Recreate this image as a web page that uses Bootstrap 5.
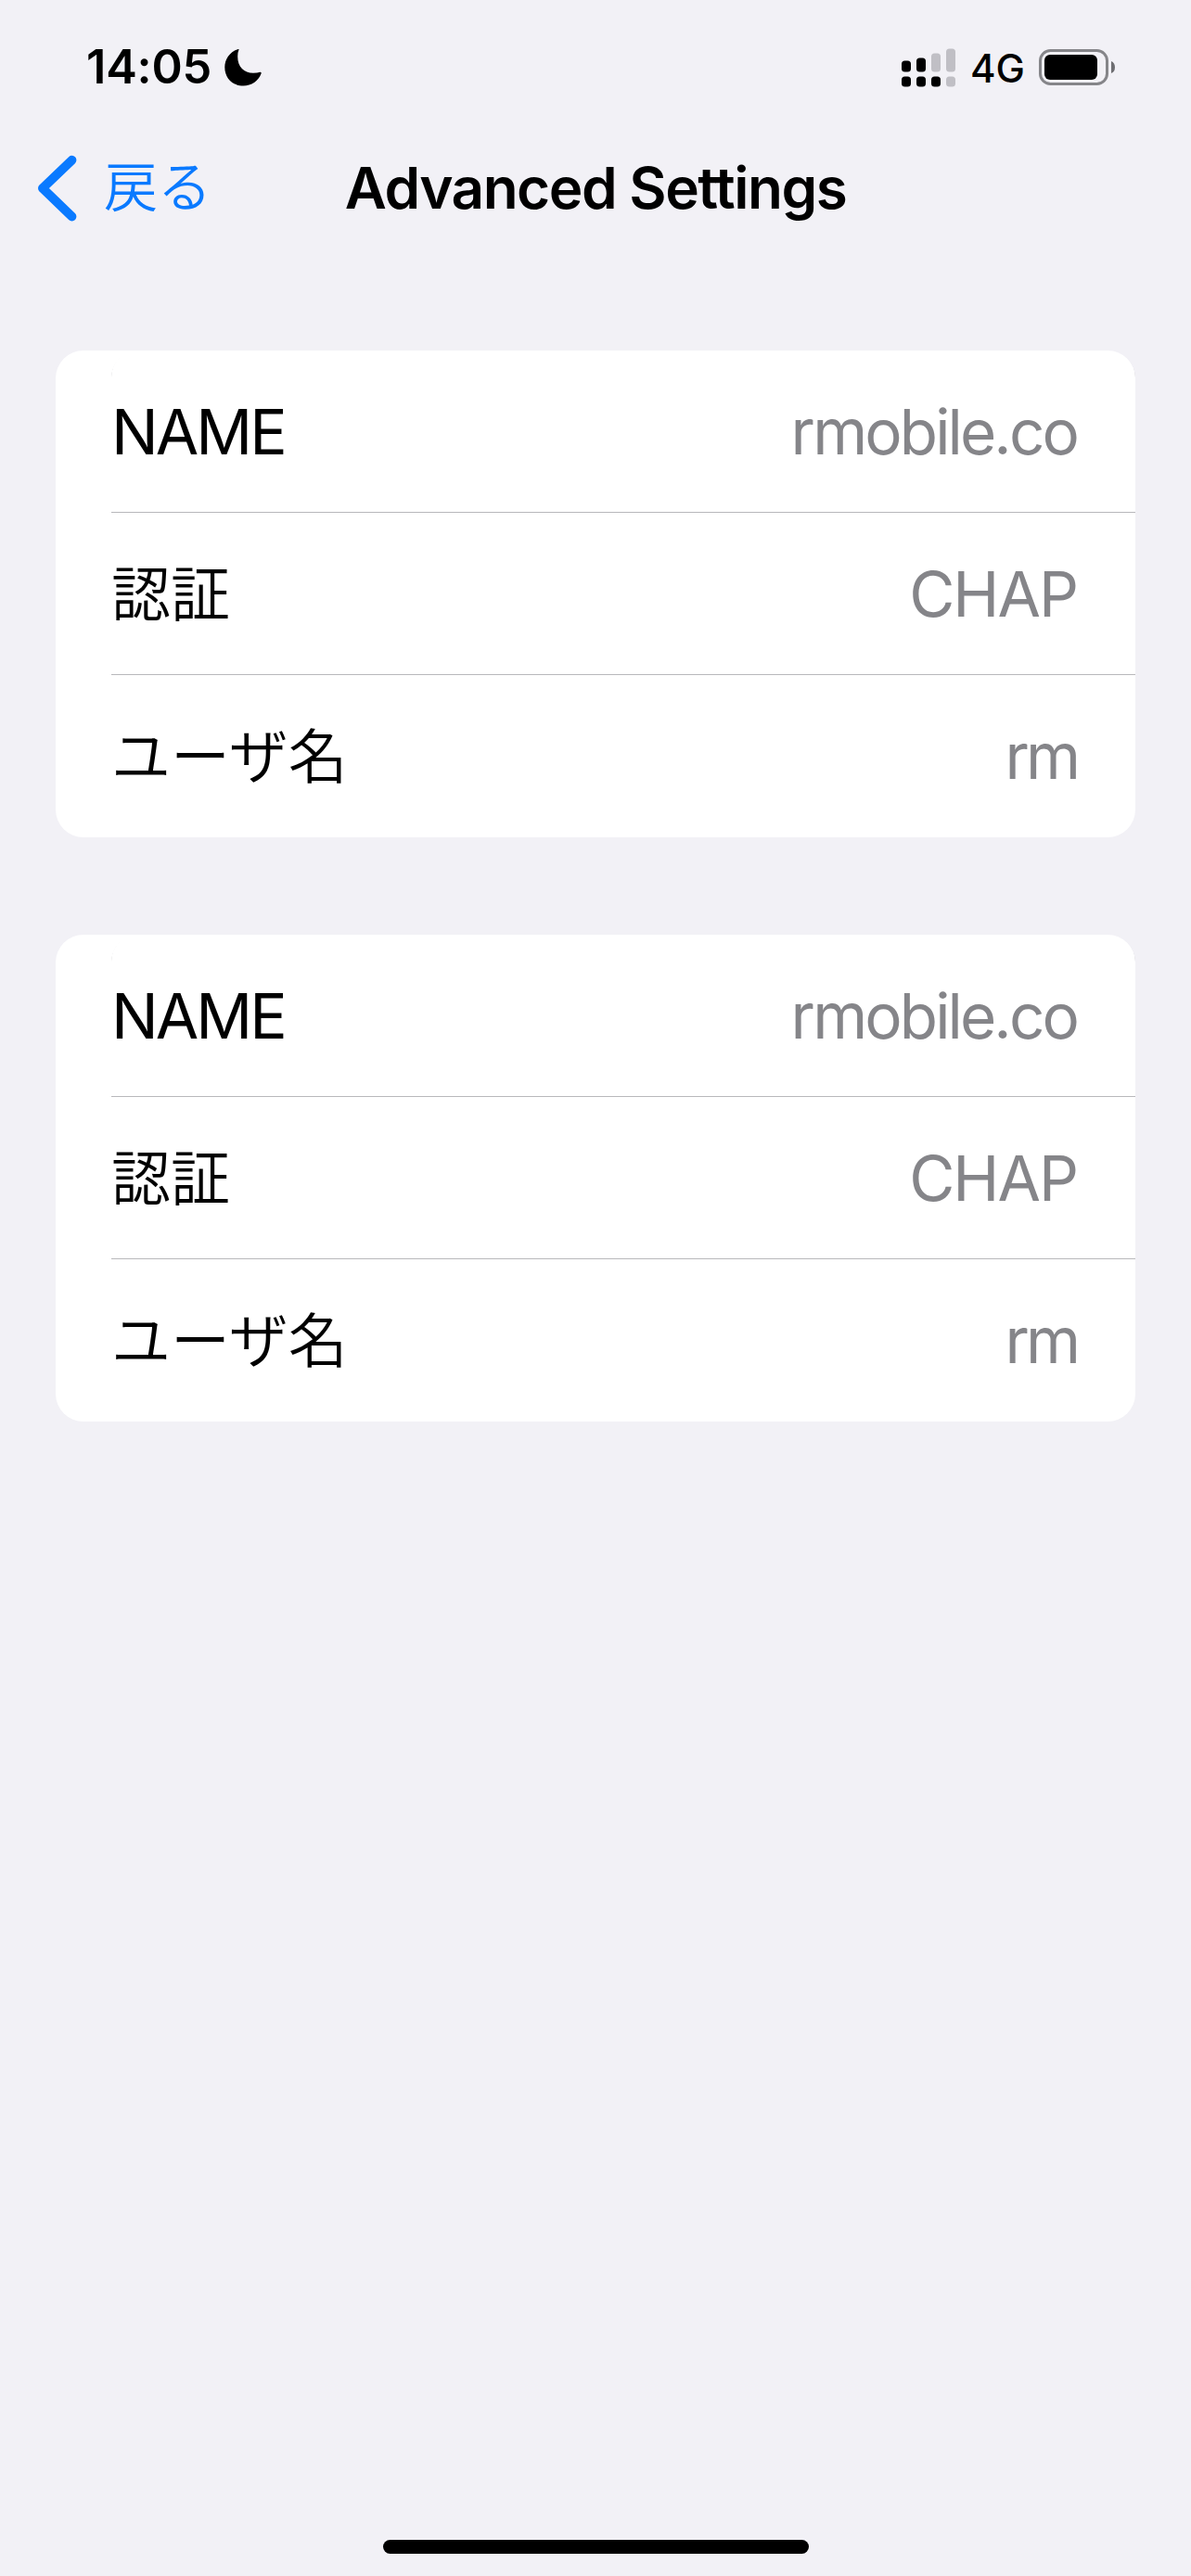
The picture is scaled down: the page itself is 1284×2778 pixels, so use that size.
<!DOCTYPE html>
<html lang="ja">
<head>
<meta charset="utf-8">
<meta name="viewport" content="width=device-width, initial-scale=1">
<title>Advanced Settings</title>
<link href="https://cdn.jsdelivr.net/npm/bootstrap@5.3.0/dist/css/bootstrap.min.css" rel="stylesheet">
<style>
body { background: #f2f1f6; color: #000; font-family: Inter, "Noto Sans CJK JP", sans-serif; }
.screen { height: 2778px; width: 1284px; overflow: hidden; }
.status-bar { height: 145px; padding: 0 82px 0 93px; }
.clock { font-size: 50.5px; font-weight: 600; line-height: 1; letter-spacing: -.2px; }
.moon { margin-left: 14px; }
.carrier { font-size: 42px; font-weight: 500; line-height: 1; margin: 3px 15px 0 16px; }
.title-bar { height: 115px; padding: 0 41px; margin-bottom: 118px; }
.title-bar > * { flex: 1 1 0; }
.back-link { color: #0a7aff; font-family: "Noto Sans CJK JP", sans-serif; font-size: 58px; line-height: 1; font-weight: 350; }
.back-link svg { margin-right: 29px; }
.back-text { padding-bottom: 10px; }
.title-bar .page-title { font-size: 62px; font-weight: 600; line-height: 1; letter-spacing: -1.48px; flex: none; margin: 0; white-space: nowrap; }
.groups { gap: 105px; padding: 0 60px; }
.group { --bs-list-group-border-width: 0; background: #fff; border-radius: 30px; padding-left: 60px; }
.setting { height: 175px; padding: 0 63px 0 0; background: transparent; color: #000; border-radius: 0; font-size: 67.4px; line-height: 1; }
.setting:not(:last-child) { box-shadow: inset 0 -1px #b8b8bb; }
.setting-value { color: #858589; letter-spacing: -2.9px; }
.value-caps { letter-spacing: -2px; }
.value-short { letter-spacing: -4px; }
.setting-label { letter-spacing: -3px; }
.label-ja { font-family: "Noto Sans CJK JP", sans-serif; font-size: 64px; font-weight: 350; letter-spacing: 0; padding-bottom: 9px; }
.home-bar { width: 459px; height: 15px; border-radius: 8px; background: #000; margin-bottom: 24px; }
</style>
</head>
<body>
<div class="screen d-flex flex-column">
  <header class="status-bar d-flex align-items-center justify-content-between">
    <div class="d-flex align-items-center">
      <span class="clock">14:05</span>
      <svg class="moon" width="40" height="40" viewBox="0 0 40 40"><path d="M15.500.6Q14.200 3.500 14.200 8C14.200 19 21 25.700 31 25.700Q35.500 25.700 38.400 24.700Q40 24.600 39.600 26.300C36.600 34.500 29 39.500 20.500 39.500C8.500 39.500.3 31.200.3 19.500C.3 11 5.500 3.200 14 .2Q16-.4 15.500.6Z"/></svg>
    </div>
    <div class="d-flex align-items-center">
      <svg width="58" height="42" viewBox="0 0 58 42">
        <g><rect y="13.500" width="10" height="12" rx="3.500"/><rect x="16" y="10.500" width="10" height="15" rx="3.500"/><rect y="30.500" width="10" height="11" rx="3.500"/><rect x="16" y="30.500" width="10" height="11" rx="3.500"/><rect x="32" y="30.500" width="10" height="11" rx="3.500"/></g>
        <g fill="#c0bfc5"><rect x="32" y="5.500" width="10" height="20" rx="3.500"/><rect x="48" y=".5" width="10" height="25" rx="3.500"/><rect x="48" y="30.500" width="10" height="11" rx="3.500"/></g>
      </svg>
      <span class="carrier">4G</span>
      <svg width="82" height="39" viewBox="0 0 82 39"><rect x="1.500" y="1.500" width="72" height="36" rx="11" fill="none" stroke="#858589" stroke-width="3"/><rect x="6" y="6" width="57" height="27" rx="6"/><path d="M78 13q4 1.500 4 6.500t-4 6.500z" fill="#6e6e72"/></svg>
    </div>
  </header>
  <nav class="title-bar d-flex align-items-center">
    <a class="back-link d-flex align-items-center text-decoration-none" href="#">
      <svg width="42" height="72" viewBox="0 0 42 72" fill="none" stroke="currentColor" stroke-width="9.800" stroke-linecap="round" stroke-linejoin="round"><path d="M36.500 5.700 4.900 36l31.600 30.500"/></svg>
      <span class="back-text">戻る</span>
    </a>
    <h1 class="page-title">Advanced Settings</h1>
    <div></div>
  </nav>
  <main class="groups d-flex flex-column flex-grow-1">
    <ul class="group list-group list-group-flush">
      <li class="setting list-group-item d-flex align-items-center justify-content-between"><span class="setting-label">NAME</span><span class="setting-value">rmobile.co</span></li>
      <li class="setting list-group-item d-flex align-items-center justify-content-between"><span class="setting-label label-ja">認証</span><span class="setting-value value-caps">CHAP</span></li>
      <li class="setting list-group-item d-flex align-items-center justify-content-between"><span class="setting-label label-ja">ユーザ名</span><span class="setting-value value-short">rm</span></li>
    </ul>
    <ul class="group list-group list-group-flush">
      <li class="setting list-group-item d-flex align-items-center justify-content-between"><span class="setting-label">NAME</span><span class="setting-value">rmobile.co</span></li>
      <li class="setting list-group-item d-flex align-items-center justify-content-between"><span class="setting-label label-ja">認証</span><span class="setting-value value-caps">CHAP</span></li>
      <li class="setting list-group-item d-flex align-items-center justify-content-between"><span class="setting-label label-ja">ユーザ名</span><span class="setting-value value-short">rm</span></li>
    </ul>
  </main>
  <div class="home-bar mx-auto"></div>
</div>
<script src="https://cdn.jsdelivr.net/npm/bootstrap@5.3.0/dist/js/bootstrap.bundle.min.js"></script>
</body>
</html>
